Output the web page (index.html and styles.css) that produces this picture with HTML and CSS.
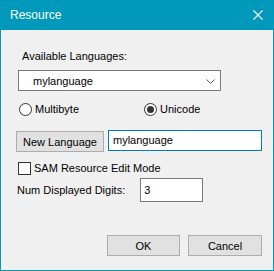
FILE: index.html
```html
<!DOCTYPE html>
<html lang="en">
<head>
  <meta charset="UTF-8">
  <title>Resource</title>
  <link rel="stylesheet" href="styles.css">
</head>
<body>
  <div class="window">
    <div class="titlebar">
      <span class="title">Resource</span>
      <svg class="close" width="10" height="10" viewBox="0 0 10 10">
        <path d="M0.5 0.5 L9.5 9.5 M9.5 0.5 L0.5 9.5" stroke="#fff" stroke-width="1.1" fill="none"/>
      </svg>
    </div>

    <div class="content">
      <div class="label avail">Available Languages:</div>

      <div class="combo">
        <span>mylanguage</span>
        <svg width="9" height="5" viewBox="0 0 9 5">
          <polyline points="0.5,0.5 4.5,4.5 8.5,0.5" stroke="#555" fill="none"/>
        </svg>
      </div>

      <div class="radios">
        <label class="radio"><span class="circle"></span>Multibyte</label>
        <label class="radio unicode"><span class="circle checked"></span>Unicode</label>
      </div>

      <div class="new-row">
        <button class="btn new-btn">New Language</button>
        <div class="input focused">mylanguage</div>
      </div>

      <label class="check"><span class="box"></span>SAM Resource Edit Mode</label>

      <div class="digits-row">
        <span class="label">Num Displayed Digits:</span>
        <div class="input digits">3</div>
      </div>

      <div class="footer">
        <button class="btn ok">OK</button>
        <button class="btn cancel">Cancel</button>
      </div>
    </div>
  </div>
</body>
</html>
```

FILE: styles.css
```css
body {
  margin: 0;
  font-family: 'Liberation Sans', Arial, sans-serif;
  font-size: 11px;
  color: #000;
}
.window {
  width: 274px;
  height: 271px;
  box-sizing: border-box;
  border: 1px solid #0099bc;
  border-top: none;
  background: #f0f0f0;
}
.titlebar {
  height: 30px;
  background: #0099bc;
  color: #fff;
  display: flex;
  align-items: center;
  justify-content: space-between;
  padding: 0 10px 0 9px;
  font-size: 12px;
}
.content {
  padding: 19px 0 0 0;
}
.label {
  line-height: 15px;
}
.avail {
  margin-left: 21px;
}
.combo {
  margin: 6px 0 0 17px;
  width: 203px;
  height: 21px;
  box-sizing: border-box;
  border: 1px solid #7a7a7a;
  background: #fff;
  display: flex;
  align-items: center;
  justify-content: space-between;
  padding: 0 5px 0 14px;
}
.combo svg {
  margin-top: 2px;
}
.radios {
  margin: 11px 0 0 18px;
  display: flex;
  height: 15px;
}
.radio, .check {
  display: flex;
  align-items: center;
  line-height: 15px;
}
.unicode {
  margin-left: 65px;
}
.circle {
  width: 13px;
  height: 13px;
  box-sizing: border-box;
  border: 1px solid #333;
  border-radius: 50%;
  background: #fff;
  margin-right: 3px;
  display: flex;
  align-items: center;
  justify-content: center;
}
.circle.checked::after {
  content: "";
  width: 7px;
  height: 7px;
  border-radius: 50%;
  background: #333;
}
.new-row {
  margin: 13px 0 0 15px;
  display: flex;
  align-items: flex-start;
  gap: 4px;
}
.btn {
  font: inherit;
  color: #000;
  background: #e1e1e1;
  border: 1px solid #adadad;
  height: 21px;
  padding: 0;
  box-sizing: border-box;
}
.new-btn {
  width: 88px;
  margin-top: 1px;
}
.input {
  height: 21px;
  box-sizing: border-box;
  border: 1px solid #7a7a7a;
  background: #fff;
  line-height: 19px;
  padding-left: 4px;
}
.input.focused {
  width: 154px;
  border-color: #0078d7;
}
.check {
  margin: 9px 0 0 17px;
  height: 15px;
}
.box {
  width: 13px;
  height: 13px;
  box-sizing: border-box;
  border: 1px solid #333;
  background: #fff;
  margin-right: 3px;
}
.digits-row {
  margin: 2px 0 0 16px;
  display: flex;
  align-items: center;
  gap: 15px;
}
.input.digits {
  width: 63px;
  height: 24px;
  line-height: 22px;
  padding-left: 3px;
}
.footer {
  margin: 33px 0 0 106px;
  display: flex;
  gap: 8px;
}
.ok {
  width: 73px;
}
.cancel {
  width: 74px;
}
```
